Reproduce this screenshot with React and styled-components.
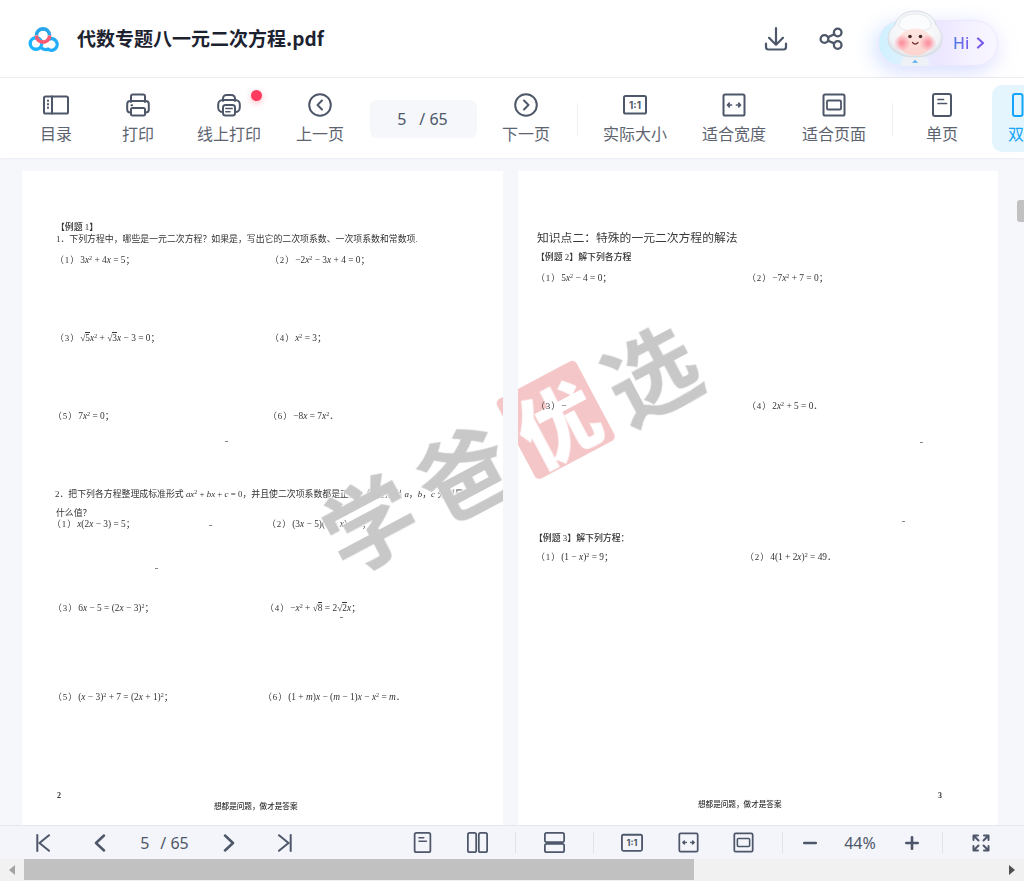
import React from "react";
import styled, { createGlobalStyle } from "styled-components";

const Global = createGlobalStyle`
  html, body { margin: 0; padding: 0; background: #fff; }
  body { font-family: Inter, "Noto Sans CJK SC", "Noto Sans", sans-serif; overflow: hidden; }
  * { box-sizing: border-box; }
`;

const INK = "#4e5769";
const BLUE = "#12a5f8";

const Shell = styled.div`
  width: 1024px; height: 881px; display: flex; flex-direction: column; overflow: hidden; background: #fff;
`;
const Header = styled.header`
  height: 78px; flex: none; display: flex; align-items: center; padding: 0 26px 2px 28px;
  background: #fff; border-bottom: 1px solid #eeeff2;
`;
const Brand = styled.svg`width: 33px; height: 26px; flex: none; margin-top: 3px;`;
const Title = styled.h1`
  margin: 0 0 0 16px; font: 600 19px/28px "Noto Sans CJK SC", "Noto Sans", sans-serif; color: #1c2230; flex: 1;
`;
const HeadIcon = styled.span`
  width: 24px; height: 24px; display: block; line-height: 0; color: ${INK};
  margin-left: ${p => p.$ml}px; margin-top: 2px;
`;
const Pill = styled.div`
  position: relative; width: 120px; height: 46px; margin-left: 35px; margin-top: 10px; border-radius: 23px;
  display: flex; align-items: center; padding-left: 74px; gap: 7px;
  background: linear-gradient(90deg, #cff1ff 0%, #dff0ff 25%, #ece6ff 50%, #f5f2ff 78%, #f8f6ff 100%);
  border: 1px solid #ebe6ff;
  box-shadow: 0 6px 22px rgba(165, 135, 255, .22), -6px 4px 18px rgba(130, 210, 255, .2);
`;
const Hi = styled.span`
  font: 500 16px/22px "Noto Sans", sans-serif;
  background: linear-gradient(90deg, #4f7ee6, #7a5ce8); -webkit-background-clip: text; background-clip: text; color: transparent;
`;
const Mascot = styled.svg`position: absolute; left: 8px; top: -11px; width: 56px; height: 56px;`;

const Toolbar = styled.nav`
  height: 80px; flex: none; display: flex; align-items: center; padding-left: 24px; background: #fff;
  position: relative; z-index: 1; box-shadow: 0 1px 3px rgba(40, 50, 80, .05);
`;
const Tool = styled.div`
  position: relative; flex: none; width: ${p => p.$w}px; height: 67px; padding-top: 8px; margin-left: ${p => p.$ml || 0}px;
  display: flex; flex-direction: column; align-items: center; gap: 5px;
  border-radius: 10px; background: ${p => (p.$active ? "#e5f5fe" : "transparent")};
  color: ${p => (p.$active ? BLUE : "#5d6470")};
`;
const ToolIcon = styled.span`display: block; height: 24px; line-height: 0; color: ${p => (p.$active ? BLUE : INK)};`;
const Label = styled.span`font: 400 16px/22px "Noto Sans CJK SC", sans-serif; white-space: nowrap;`;
const Dot = styled.i`
  position: absolute; left: 63px; top: 5px; width: 11px; height: 11px; border-radius: 50%;
  background: #ff3b5f; box-shadow: 0 2px 6px rgba(255, 59, 95, .35);
`;
const PageBox = styled.div`
  flex: none; width: 107px; height: 38px; margin-top: 2px; padding-right: 2px; border-radius: 7px; background: #f5f7fb;
  display: flex; align-items: center; justify-content: center; gap: 13px;
  font: 400 16px/22px "Noto Sans", sans-serif; color: ${INK};
`;
const ToolRule = styled.i`flex: none; width: 1px; height: 33px; margin: 2px 2px 0; background: #eef0f4;`;

const Viewer = styled.main`
  flex: 1; min-height: 0; display: flex; justify-content: space-between; overflow: hidden;
  background: #f5f7fb; padding: 13px 0 0 22px;
`;
const Spread = styled.div`display: flex; gap: 15px; align-items: flex-start;`;
const Page = styled.article`
  position: relative; width: ${p => p.$w}px; height: 700px; overflow: hidden; flex: none; background: #fff;
  padding: ${p => p.$top}px 0 0 ${p => p.$left}px; color: #333;
  font: 400 8.9px/12px "Liberation Serif", "Noto Sans CJK SC", serif;
`;
const Scan = styled.div`
  filter: blur(.35px); position: relative; z-index: ${p => (p.$over ? 1 : 0)};
`;
const Line = styled.div`
  margin: ${p => p.$t || 0}px 0 0 ${p => p.$x || 0}px; height: 12px; white-space: nowrap;
  font-weight: ${p => (p.$bold ? 500 : 400)}; font-size: ${p => p.$size || 8.9}px;
`;
const PageNumber = styled(Line)`font-size: 8px; font-weight: 700;`;
const Heading = styled(Line)`height: 16px; line-height: 16px; font-size: 11.8px; color: #383838;`;
const Problems = styled.div`
  display: grid; grid-template-columns: 215px 1fr; grid-template-rows: ${p => p.$rows};
  margin: ${p => p.$t || 0}px 0 0 ${p => p.$x || 0}px;
`;
const Problem = styled.div`white-space: nowrap; font-size: 9.4px; margin-left: ${p => p.$x || 0}px;`;
const Num = styled.span`font-size: 8.9px; letter-spacing: 1px;`;
const X = styled.i`font-family: "Liberation Serif", serif;`;
const Sup = styled.sup`font-size: 6px; line-height: 0; vertical-align: 3px;`;
const Surd = styled.span`border-top: .7px solid #333;`;
const Speck = styled.i`
  position: absolute; left: ${p => p.$x}px; top: ${p => p.$y}px; width: 3px; height: 1px; background: #888;
`;
const Watermark = styled.div`
  position: absolute; left: ${p => 281 - p.$shift}px; top: 228px; display: flex; align-items: center; gap: 15px;
  transform: rotate(-28deg); filter: blur(.5px);
`;
const Mark = styled.span`
  display: block; width: 92px; height: 92px; font: 700 92px/92px "Noto Sans CJK SC", sans-serif; color: #c8c8c8;
  text-shadow: 0 0 3px #fff, 0 0 3px #fff, 0 0 3px #fff;
`;
const Stamp = styled.span`
  display: flex; align-items: center; justify-content: center; flex: none; width: 90px; height: 90px; border-radius: 5px;
  background: rgba(232, 120, 124, .42); color: #fff; font: 900 80px/90px "Noto Sans CJK SC", sans-serif;
`;
const Track = styled.div`flex: none; width: 7px; height: 100%; background: #f5f7fb;`;
const Thumb = styled.div`width: 7px; height: 22px; margin-top: 29px; border-radius: 3px 0 0 3px; background: #c1c1c1;`;

const Bar = styled.footer`
  height: 34px; flex: none; display: flex; align-items: center; padding-left: 16px;
  background: #f3f5fa; border-top: 1px solid #e3e6ed; color: ${INK}; position: relative; z-index: 1;
`;
const BarBtn = styled.span`
  flex: none; width: ${p => p.$w || 56}px; margin-left: ${p => p.$ml || 0}px; height: 24px;
  display: flex; align-items: center; justify-content: center; line-height: 0;
`;
const BarText = styled.span`
  flex: none; width: ${p => p.$w}px; display: flex; justify-content: center; gap: ${p => p.$gap || 0}px;
  font: 400 16px/22px "Noto Sans", sans-serif; color: ${INK};
`;
const BarRule = styled.i`flex: none; width: 1px; height: 21px; margin: 0 10px 0 11px; background: #dfe3ea;`;

const HScroll = styled.div`height: 22px; flex: none; display: flex; align-items: stretch; background: #f1f1f1;`;
const Arrow = styled.span`
  flex: none; width: 24px; display: flex; align-items: center; justify-content: center; color: ${p => p.$c};
`;
const HThumb = styled.div`flex: none; width: 670px; margin-bottom: 1px; background: #c1c1c1;`;
const HRest = styled.div`flex: 1;`;

const Svg = ({ w = 24, h = 24, vw = 24, vh = 24, sw = 2, children }) => (
  <svg width={w} height={h} viewBox={`0 0 ${vw} ${vh}`} fill="none" stroke="currentColor" strokeWidth={sw} strokeLinecap="round" strokeLinejoin="round">
    {children}
  </svg>
);

const Sidebar = () => (
  <Svg w={28} vw={28}>
    <rect x="2" y="3.5" width="24" height="17" rx="1.6" />
    <path d="M10 3.5v17" />
    <path d="M6 7.5v.6M6 11v.6M6 14.5v.6" />
  </Svg>
);
const Printer = () => (
  <Svg>
    <path d="M5 9V3.2A1.7 1.7 0 0 1 6.7 1.5h10.6A1.7 1.7 0 0 1 19 3.2V9" />
    <rect x="1.2" y="8" width="21.6" height="11.5" rx="3" />
    <rect x="5" y="15" width="14" height="7.5" rx="1.5" fill="#fff" />
    <path d="M5.5 12.3h.6" />
  </Svg>
);
const RoundPrinter = () => (
  <Svg>
    <path d="M6 8V5.5A3.5 3.5 0 0 1 9.5 2h5A3.5 3.5 0 0 1 18 5.5V8" />
    <rect x="1.2" y="7" width="21.6" height="12" rx="4.5" />
    <rect x="6" y="12" width="12" height="10.5" rx="2.5" fill="#fff" />
    <path d="M8.8 15.5h6.4M8.8 18.8h4.2" strokeWidth="1.6" />
  </Svg>
);
const CircleLeft = () => (<Svg><circle cx="12" cy="12" r="10.8" /><path d="M14 7.5 9.500 12l4.500 4.500" /></Svg>);
const CircleRight = () => (<Svg><circle cx="12" cy="12" r="10.8" /><path d="M10 7.5 14.500 12 10 16.500" /></Svg>);
const OneToOne = ({ s = 24 }) => (
  <Svg w={s} h={s}>
    <rect x="1" y="3" width="22" height="17.5" rx="1.6" />
    <text x="12" y="15.5" textAnchor="middle" fontSize="10" fontWeight="700" fontFamily="Inter, sans-serif" fill="currentColor" stroke="none">1:1</text>
  </Svg>
);
const FitWidth = ({ s = 24 }) => (
  <Svg w={s} h={s}>
    <rect x="1.5" y="1.5" width="21" height="21" rx="1.6" />
    <path d="M5.5 12h4M7.3 10.200 5.500 12l1.800 1.800M14.500 12h4M16.700 10.200 18.500 12l-1.800 1.800" strokeWidth="1.7" />
  </Svg>
);
const FitPage = ({ s = 24 }) => (
  <Svg w={s} h={s}>
    <rect x="1.5" y="1.5" width="21" height="21" rx="1.6" />
    <rect x="5" y="7.5" width="14" height="9" rx="1" strokeWidth="1.8" />
  </Svg>
);
const Single = ({ s = 24, w = 18 }) => (
  <Svg w={s} h={s}>
    <rect x={12 - w / 2} y="1" width={w} height="22" rx="2" />
    <path d="M8 6.500h5.500M8 10.500h8.500" strokeWidth="1.7" />
  </Svg>
);
const Double = ({ s = 24 }) => (
  <Svg w={s} h={s}>
    <rect x="1" y="1" width="9.5" height="22" rx="2" />
    <rect x="13.5" y="1" width="9.5" height="22" rx="2" />
  </Svg>
);
const Stack = ({ s = 24 }) => (
  <Svg w={s} h={s}>
    <rect x="1" y="1" width="22" height="10.5" rx="2" />
    <rect x="1" y="13.5" width="22" height="9.5" rx="2" />
  </Svg>
);
const Download = () => (
  <Svg sw={2.2}>
    <path d="M12 1.2v16.300M5 10.800l7 7 7-7" />
    <path d="M2 16.500V20a2.500 2.500 0 0 0 2.500 2.500h15A2.500 2.500 0 0 0 22 20v-3.500" />
  </Svg>
);
const Share = () => (
  <Svg sw={2.3}>
    <circle cx="5.5" cy="12" r="3.9" />
    <circle cx="18.7" cy="5.5" r="3.8" />
    <circle cx="18.7" cy="18" r="3.8" />
    <path d="m9 10.300 6.200-3.100M9 13.700l6.200 2.700" />
  </Svg>
);
const First = () => (<Svg w={18} h={18} vw={18} vh={18}><path d="M2.300 1v16M14 1.200 4.500 9l9.500 7.800" /></Svg>);
const Prev = () => (<Svg w={12} h={18} vw={12} vh={18} sw={2.5}><path d="M10 1.500 2 9l8 7.500" /></Svg>);
const Next = () => (<Svg w={12} h={18} vw={12} vh={18} sw={2.5}><path d="M2 1.500 10 9l-8 7.500" /></Svg>);
const Last = () => (<Svg w={18} h={18} vw={18} vh={18}><path d="M15.700 1v16M4 1.200 13.500 9 4 16.800" /></Svg>);
const Minus = () => (<Svg w={14} h={14} vw={14} vh={14} sw={2.6}><path d="M1.200 7h11.600" /></Svg>);
const Plus = () => (<Svg w={14} h={14} vw={14} vh={14} sw={2.6}><path d="M1.200 7h11.600M7 1.200v11.600" /></Svg>);
const Fullscreen = () => (
  <Svg w={18} h={18} vw={18} vh={18} sw={2}>
    <path d="M1.500 6V1.500H6M1.500 1.500 6.500 6.500M12 1.500h4.500V6M16.500 1.500l-5 5M1.500 12v4.500H6M1.500 16.500l5-5M16.500 12v4.500H12M16.500 16.500l-5-5" />
  </Svg>
);

const Logo = () => (
  <Brand viewBox="0 0 33 26" fill="none" strokeLinecap="round">
    <circle cx="8" cy="17.500" r="5.800" stroke="#1db5ff" strokeWidth="3.400" />
    <path d="M12.500 21.500c2.500 2 5 2.600 7.500 1.700a5.800 5.800 0 1 0 .2-9.600" stroke="#22adf6" strokeWidth="3.400" />
    <path d="M8.400 9.500a6.600 6.600 0 0 1 13.200 0" stroke="#28a4ea" strokeWidth="3.600" strokeLinecap="butt" />
    <path d="M8.400 9.500a6.600 6.600 0 0 0 13.200 0" stroke="#fb5a72" strokeWidth="3.600" strokeLinecap="butt" />
  </Brand>
);

const Astronaut = () => (
  <Mascot viewBox="0 0 56 56">
    <defs>
      <radialGradient id="hel" cx="50%" cy="45%" r="60%">
        <stop offset="0" stopColor="#fff" />
        <stop offset=".78" stopColor="#f3f4f7" />
        <stop offset="1" stopColor="#cfd8e0" />
      </radialGradient>
      <linearGradient id="face" x1="0" y1="0" x2="0" y2="1">
        <stop offset="0" stopColor="#fde6e0" />
        <stop offset="1" stopColor="#fdd3cf" />
      </linearGradient>
      <radialGradient id="cheek">
        <stop offset="0" stopColor="#fb8b9c" />
        <stop offset="1" stopColor="#fb8b9c" stopOpacity="0" />
      </radialGradient>
    </defs>
    <path d="M14 56c-1-6 3-12 14-12s15 6 14 12z" fill="#eef1f5" />
    <path d="M25 53h6l-3-3.500z" fill="#6cb8ef" />
    <path d="M28 1C40 1 47 7 49 15c4 4 6 9 6 14 0 11-11 18-27 18S1 40 1 29c0-6 3-11 7-14C10 7 17 1 28 1z" fill="url(#hel)" stroke="#d5dde4" />
    <path d="M12 15C13 7 20 4 28 4s15 3 16 11c.5 4-6 6-16 6s-16.500-2-16-6z" fill="#fbfcfd" stroke="#e4e9ee" />
    <ellipse cx="28" cy="32" rx="17" ry="13.500" fill="url(#face)" />
    <circle cx="15" cy="33" r="8.500" fill="url(#cheek)" />
    <circle cx="41" cy="33" r="8.500" fill="url(#cheek)" />
    <circle cx="23" cy="26.500" r="1.800" fill="#4a2a2a" />
    <circle cx="33.500" cy="26.500" r="1.800" fill="#4a2a2a" />
    <path d="M25.500 32.500c1.500 2 4 2 5.500 0" stroke="#7a3a3a" strokeWidth="1.300" fill="none" strokeLinecap="round" />
  </Mascot>
);

const ChevronHi = () => (
  <svg width="9" height="12" viewBox="0 0 9 12" fill="none" stroke="#7a5ce8" strokeWidth="2.200" strokeLinecap="round" strokeLinejoin="round">
    <path d="M2 1.500 7 6l-5 4.500" />
  </svg>
);

const Stamped = ({ shift }) => (
  <Watermark $shift={shift}>
    <Mark>学</Mark>
    <Mark>爸</Mark>
    <Stamp>优</Stamp>
    <Mark>选</Mark>
  </Watermark>
);

const tools = [
  { w: 64, label: "目录", icon: <Sidebar /> },
  { w: 100, label: "打印", icon: <Printer /> },
  { w: 82, label: "线上打印", icon: <RoundPrinter />, dot: true },
  { w: 100, label: "上一页", icon: <CircleLeft /> },
];
const viewTools = [
  { w: 110, label: "实际大小", icon: <OneToOne /> },
  { w: 88, label: "适合宽度", icon: <FitWidth /> },
  { w: 112, label: "适合页面", icon: <FitPage /> },
];

export default function App() {
  return (
    <Shell>
      <Global />
      <Header>
        <Logo />
        <Title>代数专题八一元二次方程.pdf</Title>
        <HeadIcon $ml={0}><Download /></HeadIcon>
        <HeadIcon $ml={31}><Share /></HeadIcon>
        <Pill>
          <Astronaut />
          <Hi>Hi</Hi>
          <ChevronHi />
        </Pill>
      </Header>

      <Toolbar>
        {tools.map(t => (
          <Tool key={t.label} $w={t.w}>
            <ToolIcon>{t.icon}</ToolIcon>
            <Label>{t.label}</Label>
            {t.dot && <Dot />}
          </Tool>
        ))}
        <PageBox><span>5</span><span>/ 65</span></PageBox>
        <Tool $w={98}><ToolIcon><CircleRight /></ToolIcon><Label>下一页</Label></Tool>
        <ToolRule />
        {viewTools.map(t => (
          <Tool key={t.label} $w={t.w}>
            <ToolIcon>{t.icon}</ToolIcon>
            <Label>{t.label}</Label>
          </Tool>
        ))}
        <ToolRule />
        <Tool $w={94}><ToolIcon><Single /></ToolIcon><Label>单页</Label></Tool>
        <Tool $w={64} $ml={3} $active><ToolIcon $active><Double /></ToolIcon><Label>双页</Label></Tool>
      </Toolbar>

      <Viewer>
        <Spread>
          <Page $w={481} $top={50} $left={33}>
            <Scan>
              <Line $x={1} $bold>【例题 1】</Line>
              <Line $x={1}>1．下列方程中，哪些是一元二次方程？如果是，写出它的二次项系数、一次项系数和常数项.</Line>
              <Problems $t={9} $rows="78px 78px 12px">
                <Problem><Num>（1）</Num>3<X>x</X><Sup>2</Sup> + 4<X>x</X> = 5；</Problem>
                <Problem><Num>（2）</Num>−2<X>x</X><Sup>2</Sup> − 3<X>x</X> + 4 = 0；</Problem>
                <Problem><Num>（3）</Num>√<Surd>5</Surd><X>x</X><Sup>2</Sup> + √<Surd>3</Surd><X>x</X> − 3 = 0；</Problem>
                <Problem><Num>（4）</Num><X>x</X><Sup>2</Sup> = 3；</Problem>
                <Problem $x={-2}><Num>（5）</Num>7<X>x</X><Sup>2</Sup> = 0；</Problem>
                <Problem $x={-2}><Num>（6）</Num>−8<X>x</X> = 7<X>x</X><Sup>2</Sup>．</Problem>
              </Problems>
              <Line $t={66}>2．把下列各方程整理成标准形式 <X>ax</X><Sup>2</Sup> + <X>bx</X> + <X>c</X> = 0，并且使二次项系数都是正数，然后指出 <X>a</X>，<X>b</X>，<X>c</X> 分别是</Line>
              <Line $t={7} $x={1}>什么值？</Line>
              <Problems $t={-1} $x={-3} $rows="84px 89px 12px">
                <Problem><Num>（1）</Num><X>x</X>(2<X>x</X> − 3) = 5；</Problem>
                <Problem><Num>（2）</Num>(3<X>x</X> − 5)(4 − <X>x</X>) = 0；</Problem>
                <Problem $x={1}><Num>（3）</Num>6<X>x</X> − 5 = (2<X>x</X> − 3)<Sup>2</Sup>；</Problem>
                <Problem $x={-2}><Num>（4）</Num>−<X>x</X><Sup>2</Sup> + √<Surd>8</Surd> = 2√<Surd>2</Surd><X>x</X>；</Problem>
                <Problem $x={1}><Num>（5）</Num>(<X>x</X> − 3)<Sup>2</Sup> + 7 = (2<X>x</X> + 1)<Sup>2</Sup>；</Problem>
                <Problem $x={-4}><Num>（6）</Num>(1 + <X>m</X>)<X>x</X> − (<X>m</X> − 1)<X>x</X> − <X>x</X><Sup>2</Sup> = <X>m</X>．</Problem>
              </Problems>
              <PageNumber $t={87} $x={2}>2</PageNumber>
              <Line $t={-1} $x={159} $bold $size={7.6}>想都是问题，做才是答案</Line>
            </Scan>
            <Speck $x={203} $y={270} />
            <Speck $x={133} $y={397} />
            <Speck $x={187} $y={354} />
            <Speck $x={318} $y={446} />
            <Stamped shift={0} />
          </Page>
          <Page $w={480} $top={59} $left={19}>
            <Stamped shift={496} />
            <Scan $over>
              <Heading>知识点二：特殊的一元二次方程的解法</Heading>
              <Line $t={5} $x={-1} $bold>【例题 2】解下列各方程</Line>
              <Problems $t={9} $x={-1} $rows="128px 12px">
                <Problem><Num>（1）</Num>5<X>x</X><Sup>2</Sup> − 4 = 0；</Problem>
                <Problem $x={-4}><Num>（2）</Num>−7<X>x</X><Sup>2</Sup> + 7 = 0；</Problem>
                <Problem><Num>（3）</Num>−</Problem>
                <Problem $x={-4}><Num>（4）</Num>2<X>x</X><Sup>2</Sup> + 5 = 0．</Problem>
              </Problems>
              <Line $t={120} $x={-3} $bold>【例题 3】解下列方程：</Line>
              <Problems $t={7} $x={-1} $rows="12px">
                <Problem><Num>（1）</Num>(1 − <X>x</X>)<Sup>2</Sup> = 9；</Problem>
                <Problem $x={-6}><Num>（2）</Num>4(1 + 2<X>x</X>)<Sup>2</Sup> = 49．</Problem>
              </Problems>
              <PageNumber $t={227} $x={401}>3</PageNumber>
              <Line $t={-3} $x={161} $bold $size={7.6}>想都是问题，做才是答案</Line>
            </Scan>
            <Speck $x={402} $y={271} />
            <Speck $x={384} $y={350} />
          </Page>
        </Spread>
        <Track><Thumb /></Track>
      </Viewer>

      <Bar>
        <BarBtn><First /></BarBtn>
        <BarBtn><Prev /></BarBtn>
        <BarText $w={73} $gap={11}><span>5</span><span>/ 65</span></BarText>
        <BarBtn><Next /></BarBtn>
        <BarBtn $w={54}><Last /></BarBtn>
        <BarBtn $ml={83}><Single s={21} /></BarBtn>
        <BarBtn $w={54}><Double s={21} /></BarBtn>
        <BarRule />
        <BarBtn><Stack s={21} /></BarBtn>
        <BarRule />
        <BarBtn $w={56}><OneToOne s={22} /></BarBtn>
        <BarBtn $w={56}><FitWidth s={21} /></BarBtn>
        <BarBtn $w={55}><FitPage s={21} /></BarBtn>
        <BarRule />
        <BarBtn $w={34}><Minus /></BarBtn>
        <BarText $w={66}>44%</BarText>
        <BarBtn $w={38}><Plus /></BarBtn>
        <BarRule />
        <BarBtn $w={56}><Fullscreen /></BarBtn>
      </Bar>

      <HScroll>
        <Arrow $c="#a3a3a3"><svg width="8" height="10" viewBox="0 0 8 10"><path d="M7 0v10L1 5z" fill="currentColor" /></svg></Arrow>
        <HThumb />
        <HRest />
        <Arrow $c="#505050"><svg width="8" height="10" viewBox="0 0 8 10"><path d="M1 0v10l6-5z" fill="currentColor" /></svg></Arrow>
      </HScroll>
    </Shell>
  );
}
